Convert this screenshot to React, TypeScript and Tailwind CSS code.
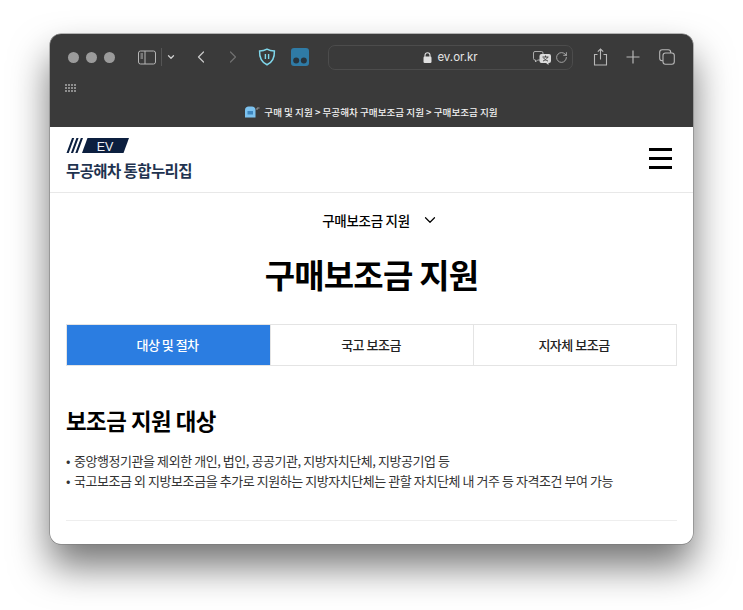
import { ChevronDown, ChevronLeft, ChevronRight, RotateCw } from 'lucide-react'

const font = { fontFamily: '"Noto Sans CJK KR", "Noto Sans", sans-serif' }

const tabs = ['대상 및 절차', '국고 보조금', '지자체 보조금']

const Toolbar = () => (
    <div className="flex h-[93px] flex-col bg-[#3a3a3a]">
        <div className="flex h-[46px] items-center">
            {/* Traffic lights */}
            <div className="ml-[18px] flex gap-[7px]">
                <span className="h-[11px] w-[11px] rounded-full bg-[#9b9b9b]" />
                <span className="h-[11px] w-[11px] rounded-full bg-[#9b9b9b]" />
                <span className="h-[11px] w-[11px] rounded-full bg-[#9b9b9b]" />
            </div>
            <svg className="ml-[23px]" width="18" height="15" viewBox="0 0 18 15" fill="none" stroke="#b5b5b5" strokeWidth="1">
                <rect x="0.5" y="1" width="17" height="13" rx="2" />
                <path d="M7 1v13" />
                <path d="M2.5 4h2.5M2.5 6h2.5M2.5 8h2.5" />
            </svg>
            <span className="ml-[5px] h-[18px] w-px bg-[#555555]" />
            <ChevronDown className="ml-[4px] text-[#d0d0d0]" size={10} strokeWidth={3} />
            <ChevronLeft className="ml-[15px] text-[#c8c8c8]" size={20} strokeWidth={1.5} />
            <ChevronRight className="ml-[12px] text-[#707070]" size={20} strokeWidth={1.5} />
            {/* Extension icons */}
            <svg className="ml-[15px]" width="18" height="18" viewBox="0 0 18 18" fill="none">
                <path d="M9 1.2c2.6 1.5 4.8 1.8 7.4 1.8.3 6.6-2.2 11.4-7.4 13.8C3.8 14.400 1.3 9.600 1.600 3c2.600 0 4.800-.3 7.400-1.800z" stroke="#7fd6ea" strokeWidth="1.5" />
                <path d="M7.400 6v5M10.600 6v5" stroke="#7fd6ea" strokeWidth="1.4" />
            </svg>
            <svg className="ml-[15px]" width="18" height="18" viewBox="0 0 18 18">
                <rect width="18" height="18" rx="3" fill="#2f7ba6" />
                <circle cx="5.200" cy="12.500" r="3" fill="#27343e" />
                <circle cx="12.800" cy="12.500" r="3" fill="#27343e" />
            </svg>
            {/* Address bar */}
            <div className="relative ml-[19px] flex h-[25px] w-[245px] items-center justify-center rounded-[7px] border border-[#4c4c4c] pt-[1px]">
                <svg className="mr-[5px]" width="9" height="11" viewBox="0 0 9 11">
                    <path d="M2 5V3.200a2.500 2.500 0 0 1 5 0V5" fill="none" stroke="#e0e0e0" strokeWidth="1.100" />
                    <rect x="0.500" y="4.500" width="8" height="6.500" rx="1.200" fill="#e0e0e0" />
                </svg>
                <span className="text-[11.5px] text-[#e6e6e6]" style={{ fontFamily: '"Inter", sans-serif' }}>ev.or.kr</span>
                <div className="absolute right-[4px] top-[5px] flex items-center gap-[4px]">
                    <svg width="18" height="14" viewBox="0 0 18 14">
                        <path d="M2 .5h6.500A1.500 1.500 0 0 1 10 2v5.500A1.500 1.500 0 0 1 8.500 9H4.500L2.500 11V9H2A1.500 1.500 0 0 1 .5 7.500V2A1.500 1.500 0 0 1 2 .5z" fill="none" stroke="#c8c8c8" strokeWidth="0.800" />
                        <path d="M8.500 3h7.500A2 2 0 0 1 18 5v5a2 2 0 0 1-2 2h-.5v2L13 12H8.500a2 2 0 0 1-2-2V5a2 2 0 0 1 2-2z" fill="#dcdcdc" />
                        <path d="M9.500 6h6M12.500 4.500V6M14.500 6c-.5 2-2.500 3.500-4.500 4M10.500 6.800c.8 1.500 2.500 2.700 4.500 3.200" fill="none" stroke="#3a3a3a" strokeWidth="0.900" />
                    </svg>
                    <RotateCw className="text-[#c4c4c4]" size={13} strokeWidth={1.4} />
                </div>
            </div>
            <svg className="ml-[20px]" width="15" height="18" viewBox="0 0 15 18" fill="none" stroke="#b8b8b8" strokeWidth="1.100">
                <path d="M4.500 6.500H1.500v10.500h12V6.500h-3" />
                <path d="M7.500 11.500V1M4.800 3.600 7.500 1l2.700 2.600" />
            </svg>
            <svg className="ml-[18px]" width="14" height="14" viewBox="0 0 14 14" fill="none" stroke="#b8b8b8" strokeWidth="1.200">
                <path d="M7 0.500v13M0.500 7h13" />
            </svg>
            <svg className="ml-[19px]" width="16" height="16" viewBox="0 0 16 16" fill="none" stroke="#b8b8b8" strokeWidth="1.100">
                <rect x="0.700" y="0.700" width="11" height="11" rx="2.500" />
                <rect x="4" y="4" width="11.300" height="11.300" rx="2.500" fill="#3a3a3a" />
            </svg>
        </div>
        {/* Favorites row */}
        <div className="ml-[15px] mt-[4px] grid w-[11px] grid-cols-4 gap-[1px]">
            {Array.from({ length: 12 }).map((_, i) => (
                <span key={i} className="h-[2px] w-[2px] bg-[#8e8e8e]" />
            ))}
        </div>
        {/* Page title */}
        <div className="mt-[13px] flex items-center justify-center gap-[4px] text-[9.6px] font-medium text-[#f2f2f2]" style={font}>
            <svg width="15" height="12" viewBox="0 0 15 12">
                <path d="M0 4C0 2 1.500 .5 3.500 .5h3.500C9 .5 10.500 2 10.500 4v7.500H0z" fill="#7cc2ef" />
                <path d="M2.500 5h5.500v3.500H2.500z" fill="#3d86c0" />
                <path d="M12 4V2h2.500" fill="none" stroke="#9a9a9a" strokeWidth="1" />
            </svg>
            <span>구매 및 지원 &gt; 무공해차 구매보조금 지원 &gt; 구매보조금 지원</span>
        </div>
    </div>
)

const Header = () => (
    <header className="flex h-[66px] items-start justify-between border-b border-[#e8e8e8] px-[16px] pt-[11px]">
        <div>
            <svg width="64" height="15" viewBox="0 0 64 15" className="block">
                <path d="M.5 15 6 0h2.200L2.700 15zM4.900 15 10.400 0h2.200L7.100 15zM9.300 15 14.800 0h2.200L11.500 15z" fill="#0c1f3f" />
                <path d="M21.500 0H63l-5.500 15H16z" fill="#0c1f3f" />
                <text x="39" y="12.500" textAnchor="middle" fontSize="12.5" fill="#f0f2f5" style={{ fontFamily: '"Liberation Sans", sans-serif' }}>EV</text>
            </svg>
            <div className="mt-[5px] text-[15.5px] font-bold leading-[24px] tracking-[-0.6px] text-[#1f3350]">무공해차 통합누리집</div>
        </div>
        <div className="mr-[5px] mt-[10px] flex w-[23px] flex-col gap-[6px]">
            <span className="h-[3px] bg-black" />
            <span className="h-[3px] bg-black" />
            <span className="h-[3px] bg-black" />
        </div>
    </header>
)

export default function App() {
    return (
        <div className="h-[610px] w-[743px] overflow-hidden bg-white pl-[50px] pt-[34px]" style={font}>
            <div className="flex h-[510px] w-[643px] flex-col overflow-hidden rounded-[11px] bg-white shadow-[0_0_0_0.5px_#777777,0_22px_38px_rgba(0,0,0,0.55)]">
                <Toolbar />
                <Header />
                <main className="flex flex-col px-[16px]">
                    <div className="mt-[17px] flex items-center justify-center gap-[11px] pl-[18px] text-[13.5px] font-medium leading-[20px] tracking-[-0.3px] text-black">
                        구매보조금 지원
                        <ChevronDown size={18} strokeWidth={1.6} />
                    </div>
                    <h1 className="mt-[19px] text-center text-[33px] font-bold leading-[50px] tracking-[-0.8px] text-black">구매보조금 지원</h1>
                    <div className="mt-[25px] grid h-[42px] grid-cols-3 border border-[#e4e4e4]">
                        {tabs.map((tab, i) => (
                            <div
                                key={tab}
                                className={
                                    i === 0
                                        ? 'flex items-center justify-center bg-[#2b7de1] pr-[2px] text-[13px] font-medium tracking-[-0.5px] text-white'
                                        : 'flex items-center justify-center border-l border-[#e4e4e4] pr-[2px] text-[13px] font-medium tracking-[-0.5px] text-[#222222]'
                                }
                            >
                                {tab}
                            </div>
                        ))}
                    </div>
                    <h2 className="mt-[37px] text-[22.4px] font-bold leading-[34px] tracking-[-0.5px] text-black">보조금 지원 대상</h2>
                    <ul className="mt-[14px] text-[13px] leading-[20px] tracking-[-0.44px] text-[#333333]">
                        <li className="flex">
                            <span className="w-[8px]">•</span>
                            <span>중앙행정기관을 제외한 개인, 법인, 공공기관, 지방자치단체, 지방공기업 등</span>
                        </li>
                        <li className="flex">
                            <span className="w-[8px]">•</span>
                            <span>국고보조금 외 지방보조금을 추가로 지원하는 지방자치단체는 관할 자치단체 내 거주 등 자격조건 부여 가능</span>
                        </li>
                    </ul>
                    <div className="mt-[29px] h-px bg-[#eeeeee]" />
                </main>
            </div>
        </div>
    )
}
